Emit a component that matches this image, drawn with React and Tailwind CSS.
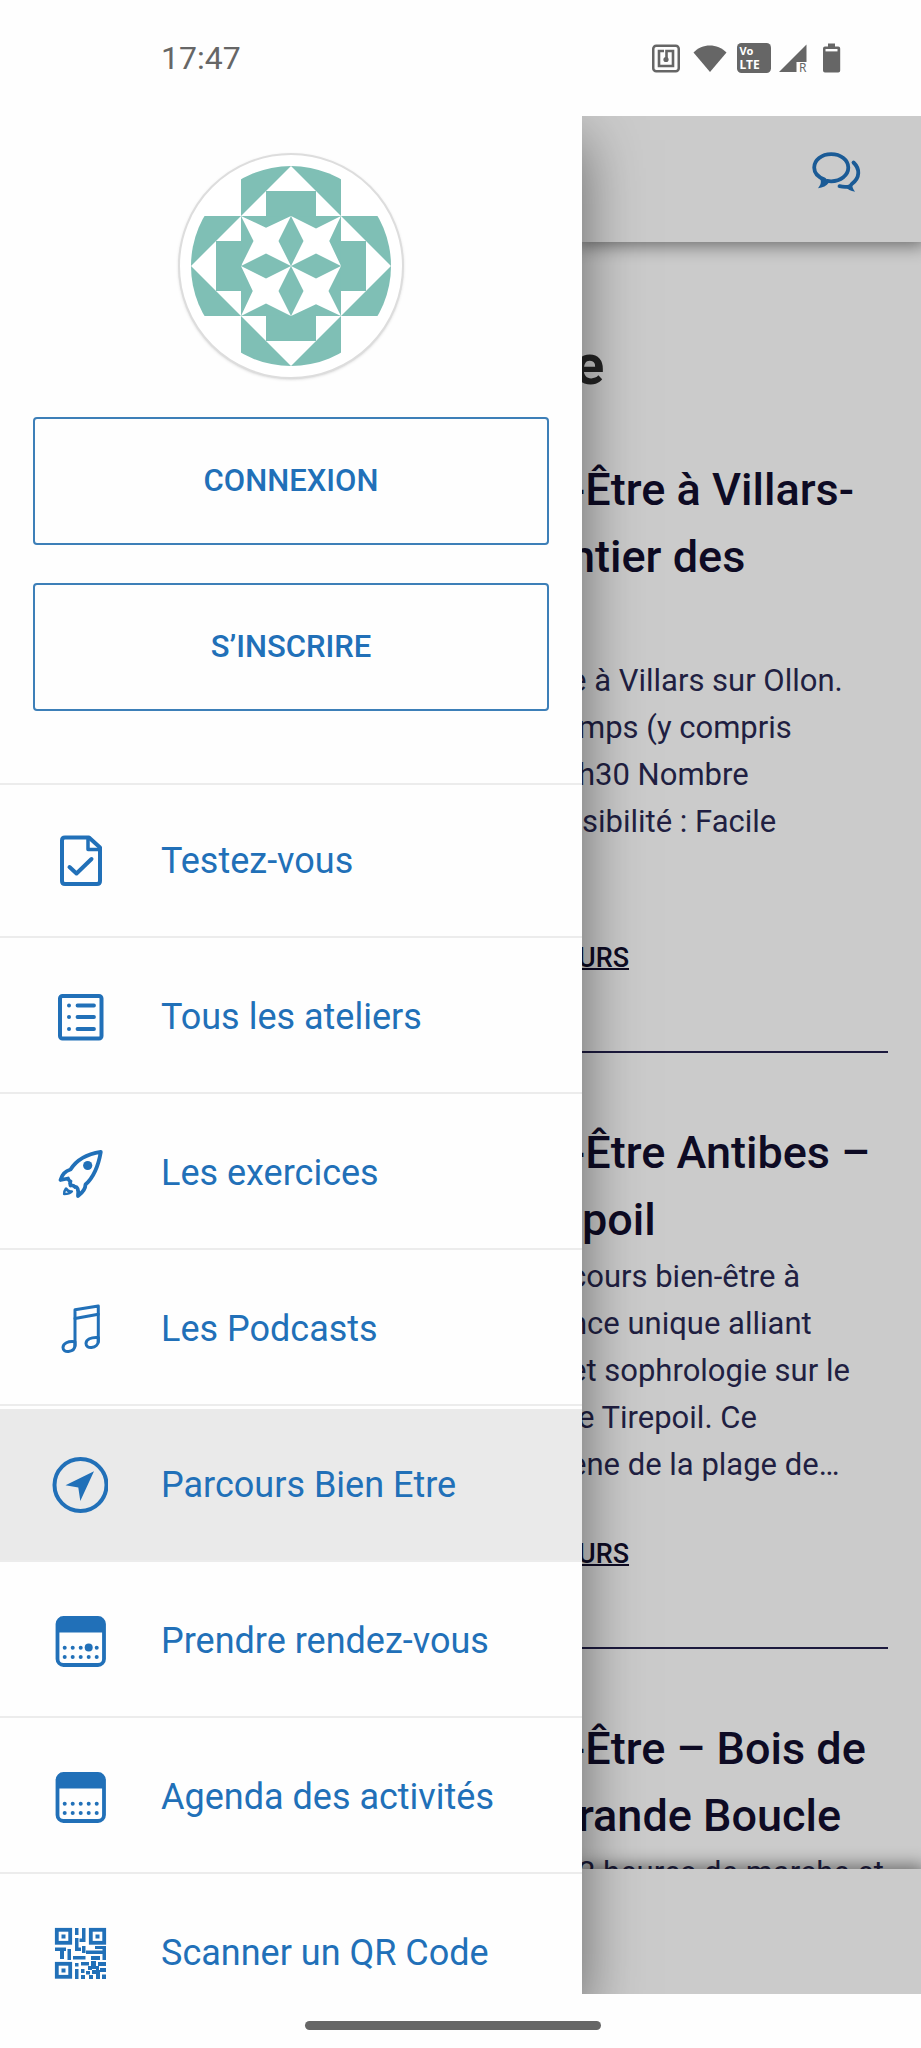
/**
 * App.jsx - Mobile screen with the navigation drawer open
 *
 * Android status bar on top, the drawer (avatar, account buttons and menu)
 * on the left, the dimmed "Parcours" list page behind it on the right, and
 * the gesture bar at the bottom.
 */

function NfcIcon() {
  return (
    <svg width="28" height="29" viewBox="0 0 28 29" fill="none" stroke="#666666" aria-hidden="true">
      <rect x="1.25" y="1.75" width="25.5" height="25.5" rx="3" strokeWidth="2.5" />
      <path d="M12 7H7v15h14V7h-6.5v8" strokeWidth="2.6" />
      <circle cx="14" cy="15.5" r="2.6" fill="#666666" stroke="none" />
    </svg>
  );
}

function WifiIcon() {
  return (
    <svg width="41" height="29" viewBox="0 0 41 29" fill="#666666" aria-hidden="true">
      <path d="M5.5 8.5C14 -1 29.5 -1 38.5 8.5L22 28Z" />
    </svg>
  );
}

function VolteIcon() {
  return (
    <svg width="34" height="30" viewBox="0 0 34 30" aria-hidden="true">
      <rect width="34" height="30" rx="4.5" fill="#666666" />
      <g fill="#ffffff" fontFamily="Noto Sans, sans-serif" fontWeight="700">
        <text x="2.5" y="12" fontSize="11">Vo</text>
        <text x="2.5" y="26" fontSize="12">LTE</text>
      </g>
    </svg>
  );
}

function SignalIcon() {
  return (
    <svg width="28" height="29" viewBox="0 0 28 29" aria-hidden="true">
      <path d="M27.5 0.5V28H0Z" fill="#666666" />
      <rect x="17.5" y="18" width="11" height="11" fill="#fefefe" />
      <text x="20" y="28" fontSize="12" fontFamily="Noto Sans, sans-serif" fill="#666666">R</text>
    </svg>
  );
}

function BatteryIcon() {
  return (
    <svg width="26" height="30" viewBox="0 0 26 30" aria-hidden="true">
      <path d="M13 0.5h7v3h3.2q2 0 2 2V27.5q0 2-2 2H10q-2 0-2-2V5.5q0-2 2-2h3Z" fill="#666666" />
      <rect x="10.5" y="6" width="12" height="2.4" fill="#fefefe" />
    </svg>
  );
}

function ChatIcon() {
  return (
    <svg width="50" height="42" viewBox="0 0 50 42" fill="none" stroke="#1b5b96" strokeWidth="3.8" strokeLinecap="round" strokeLinejoin="round" aria-hidden="true">
      <path d="M12.5 27.6C6 25.2 2.2 20.8 2.2 15.6C2.2 8 9.7 2.2 19.2 2.2S36.3 8 36.3 15.6S28.7 29.3 19.2 29.3C17.8 29.3 16.5 29.2 15.2 28.9" />
      <path d="M8 26.5C9.8 30 8.6 33 6 36.2C11 35.5 14.5 34 17 30.5Z" fill="#1b5b96" stroke="none" />
      <path d="M41.5 10.5C47.8 16.5 48.6 25.5 39.5 32.2" />
      <path d="M27.5 34.2C31.5 35.1 35 35 38 34.3" />
      <path d="M42 30C39.2 33 40.5 36.5 43.2 39.8C38.5 39 35.5 37.5 33.5 34.5Z" fill="#1b5b96" stroke="none" />
    </svg>
  );
}

const STAR = '-2,-2 -1,-1.53 0,-2 -0.5,-1 0,0 -1,-0.5 -2,0 -1.5,-1';

function Avatar() {
  return (
    <svg className="size-[200px]" viewBox="-4 -4 8 8" role="img" aria-label="Avatar">
      <clipPath id="avatar-disc">
        <circle r="4" />
      </clipPath>
      <g clipPath="url(#avatar-disc)">
        <path d="M-2 -4H2V4H-2Z M-4 -2H-2V2H-4Z M2 -2H4V2H2Z" fill="#7fbfb5" />
        {[0, 90, 180, 270].map((angle) => (
          <g key={angle} transform={`rotate(${angle})`}>
            <path d="M-2 -2L0 -4L2 -2Z" fill="#ffffff" />
            <path d="M-1 -1.98V-3H1V-1.98Z" fill="#7fbfb5" />
            <polygon points={STAR} fill="#ffffff" />
          </g>
        ))}
      </g>
    </svg>
  );
}

function MenuIcon({ children }) {
  return (
    <svg
      className="size-14 shrink-0 text-[#2170b8]"
      viewBox="0 0 56 56"
      fill="none"
      stroke="currentColor"
      strokeWidth="4"
      strokeLinecap="round"
      strokeLinejoin="round"
      aria-hidden="true"
    >
      {children}
    </svg>
  );
}

function TestIcon() {
  return (
    <MenuIcon>
      <path d="M37 4.5H13Q10 4.5 10 7.5V48Q10 51 13 51H45Q48 51 48 48V14.5Z" />
      <path d="M36 5V16.5H47.5" strokeWidth="3.5" />
      <path d="M17.5 34L24.5 40.5L39.5 26" />
    </MenuIcon>
  );
}

function ListIcon() {
  return (
    <MenuIcon>
      <rect x="8" y="7" width="41.5" height="42.5" rx="2.5" />
      <path d="M25.5 16.5H42M25.5 28H42M25.5 40H42" strokeWidth="3.8" />
      <g fill="currentColor" stroke="none">
        <circle cx="17" cy="16.5" r="2" />
        <circle cx="17" cy="28" r="2" />
        <circle cx="17" cy="40" r="2" />
      </g>
    </MenuIcon>
  );
}

function RocketIcon() {
  return (
    <MenuIcon>
      <g strokeWidth="3.8">
        <path d="M48.8 6.8C35 9 24 15.5 18.5 24.5C13 26 10 29.5 8.5 35L16 33.5C16.5 35 17.5 36 18.5 36.5C17.5 38 18 39.5 18.5 40.5C20.5 40 22 40.5 23 42C25 41.5 27 44 26 51C32 46.5 33.5 43 33.5 39.5C42 32 46.5 20 48.8 6.8Z" />
        <path d="M14 43.5C12.5 45.5 12 47.5 12.2 49C15 49 18 48.5 19.8 46.5C17.5 47 15.5 46 14 43.5Z" strokeWidth="2.6" />
      </g>
      <circle cx="35.7" cy="20.5" r="4.6" fill="currentColor" stroke="none" />
    </MenuIcon>
  );
}

function MusicIcon() {
  return (
    <MenuIcon>
      <g strokeWidth="3">
        <path d="M23 45V8.8L46.3 5V41" />
        <path d="M23 17.5L46.3 13.3" />
        <path d="M23 40.8C16 39.8 11 42.5 11 46.5C11 49.5 13.5 50.8 16.5 50.5C20.5 50 23 47.5 23 44Z" />
        <path d="M46.3 36.5C39 35.8 34 38.5 34 42.5C34 45.5 36.5 46.8 39.5 46.5C43.5 46 46.3 43.5 46.3 40Z" />
      </g>
    </MenuIcon>
  );
}

function CompassIcon() {
  return (
    <MenuIcon>
      <circle cx="28.5" cy="28" r="26" />
      <path d="M42 14.3L13.5 28.3L26.3 30.5L28.3 44Z" fill="currentColor" stroke="none" />
    </MenuIcon>
  );
}

const DOT_COLUMNS = [12.7, 20.7, 28.7, 36.7, 44.7];

function CalendarIcon({ marked }) {
  return (
    <MenuIcon>
      <rect x="5.5" y="5" width="46.5" height="47" rx="6" strokeWidth="3.8" />
      <path d="M5.5 19.5V11Q5.5 5 11.5 5H46Q52 5 52 11V19.5Z" fill="currentColor" stroke="none" />
      <g fill="currentColor" stroke="none">
        {DOT_COLUMNS.map((x) => (
          <g key={x}>
            <circle cx={x} cy="34.7" r="2" />
            <circle cx={x} cy="44" r="2" />
          </g>
        ))}
        {marked && <circle cx="36.7" cy="34.5" r="4" />}
      </g>
    </MenuIcon>
  );
}

function QrIcon() {
  return (
    <MenuIcon>
      <g transform="translate(3 3)" strokeWidth="3.8" strokeLinejoin="miter">
        <rect x="1.8" y="1.8" width="13.4" height="13" />
        <rect x="35.8" y="1.8" width="13.4" height="13" />
        <rect x="1.8" y="35.8" width="13.4" height="13" />
      </g>
      <g transform="translate(3 3)" fill="currentColor" stroke="none">
        <path d="M6.5 6.5h4v4h-4z M40.5 6.5h4v4h-4z M6.5 40.5h4v4h-4z" />
        <path d="M20 0h3.5v7H20z M27 0h3.5v14h-6v-3.5H27z M20 10h3.5v12H20z M20 19.5h6V23h-6z" />
        <path d="M0 19.5h11V23H9v8H5v-8H0z M12.5 21H16v11h-3.5z M18 28h12.5v3.5H18z M27 18h3.5v7H27z" />
        <path d="M40 18h11v14h-3.5v-6H31v-3.5h16.5V21H40z M36 28h9v4h-9z" />
        <path d="M20 35h3.5v3.5H20z M20 41h3.5v10H20z M26 34h8v3.5h-8z M26 41h3.5v4H26z M26 47h4v4h-4z" />
        <path d="M33 38h4v4h-4z M36 33h5v8h-5z M37 42h8v4h-8z M43 34h4v4h-4z M41 38h3v6h-3z M47 34h4v4h-4z M45 40h6v4h-6z" />
        <path d="M31 43h4v3.5h-4z M34 47h4v4h-4z M41 46h4v5h-4z M47 46.5h4V51h-4z" />
      </g>
    </MenuIcon>
  );
}

const MENU_ITEMS = [
  { label: 'Testez-vous', icon: <TestIcon /> },
  { label: 'Tous les ateliers', icon: <ListIcon /> },
  { label: 'Les exercices', icon: <RocketIcon /> },
  { label: 'Les Podcasts', icon: <MusicIcon /> },
  { label: 'Parcours Bien Etre', icon: <CompassIcon />, active: true },
  { label: 'Prendre rendez-vous', icon: <CalendarIcon marked /> },
  { label: 'Agenda des activités', icon: <CalendarIcon /> },
  { label: 'Scanner un QR Code', icon: <QrIcon /> },
];

const ARTICLES = [
  {
    title: [
      { text: '-Être à Villars-', pull: '-ml-3' },
      { text: 'ntier des', pull: '-ml-3' },
      { text: '' },
    ],
    body: [
      { text: 'e à Villars sur Ollon.', pull: '-ml-3' },
      { text: 'mps (y compris', pull: '-ml-1' },
      { text: 'h30 Nombre', pull: '-ml-1' },
      { text: 'sibilité : Facile' },
      { text: '' },
    ],
  },
  {
    title: [{ text: '-Être Antibes –', pull: '-ml-3' }, { text: 'poil' }],
    body: [
      { text: 'cours bien-être à', pull: '-ml-3' },
      { text: 'nce unique alliant', pull: '-ml-3' },
      { text: 'et sophrologie sur le', pull: '-ml-3' },
      { text: 'e Tirepoil. Ce', pull: '-ml-1' },
      { text: 'ène de la plage de…', pull: '-ml-3' },
    ],
  },
  {
    title: [
      { text: '-Être – Bois de', pull: '-ml-3' },
      { text: 'rande Boucle', pull: '-ml-1' },
    ],
    body: [{ text: '2 heures de marche et', pull: '-ml-1' }],
  },
];

function StatusBar() {
  return (
    <div className="flex h-[116px] shrink-0 items-center justify-between pl-[161px] pr-20 text-[#666666]">
      <span className="text-[32px] leading-10">17:47</span>
      <div className="flex items-center gap-2">
        <NfcIcon />
        <WifiIcon />
        <VolteIcon />
        <SignalIcon />
        <BatteryIcon />
      </div>
    </div>
  );
}

function AccountButton({ children }) {
  return (
    <button
      type="button"
      className="h-32 w-full rounded-[4px] border-2 border-[#3d7fb8] text-[31px] font-medium text-[#2170b8]"
    >
      {children}
    </button>
  );
}

function Drawer() {
  return (
    <aside className="relative z-20 min-h-0 bg-[#fefefe] shadow-[0_24px_56px_rgba(0,0,0,0.5)]">
      <div className="flex h-full flex-col overflow-hidden">
        <div className="flex shrink-0 flex-col items-center gap-[38px] px-[33px] pt-[37px] pb-[72px]">
          <div className="flex size-[226px] items-center justify-center rounded-full border-2 border-[#dddddd] bg-white shadow-sm">
            <Avatar />
          </div>
          <AccountButton>CONNEXION</AccountButton>
          <AccountButton>S’INSCRIRE</AccountButton>
        </div>

        <nav>
          <ul className="flex flex-col gap-[3px] border-t-2 border-[#ececec]">
            {MENU_ITEMS.map((item) => (
              <li
                key={item.label}
                className={`border-b-2 border-[#ececec] ${item.active ? 'bg-[#eaeaea]' : ''}`}
              >
                <a
                  href="#"
                  aria-current={item.active ? 'page' : undefined}
                  className="flex h-[151px] items-center gap-[53px] pl-[52px] text-4xl whitespace-nowrap text-[#2170b8]"
                >
                  {item.icon}
                  {item.label}
                </a>
              </li>
            ))}
          </ul>
        </nav>
      </div>
    </aside>
  );
}

function Article({ article }) {
  return (
    <article className="mr-[33px] border-b-2 border-[#1c1a3e] pt-[66px] pb-[77px] whitespace-nowrap">
      <h2 className="text-[45px] leading-[67px] font-medium text-[#0e0b24]">
        {article.title.map((line, index) => (
          <span key={index} className={`block h-[67px] ${line.pull ?? ''}`}>
            {line.text}
          </span>
        ))}
      </h2>
      <p className="text-[31px] leading-[47px] text-[#211f42]">
        {article.body.map((line, index) => (
          <span key={index} className={`block h-[47px] ${line.pull ?? ''}`}>
            {line.text}
          </span>
        ))}
      </p>
      <a
        href="#"
        className="mt-[50px] -ml-1 block text-[27px] leading-8 font-medium text-[#0e0b24] underline decoration-2"
      >
        URS
      </a>
    </article>
  );
}

function Page() {
  return (
    <main className="flex min-h-0 min-w-0 flex-col bg-[#cbcbcb]">
      <header className="relative z-10 flex h-[126px] shrink-0 items-start justify-end bg-[#cbcbcb] pt-9 pr-[59px] shadow-[0_0_16px_4px_rgba(0,0,0,0.45)]">
        <button type="button" aria-label="Messages">
          <ChatIcon />
        </button>
      </header>

      <div className="min-h-0 flex-1 overflow-hidden pt-[98px]">
        <h1 className="-ml-2 text-[56px] leading-[50px] font-bold text-[#242424]">e</h1>
        {ARTICLES.map((article) => (
          <Article key={article.title[0].text} article={article} />
        ))}
      </div>

      <footer className="relative z-10 h-[125px] shrink-0 bg-[#cbcbcb] shadow-[0_0_16px_4px_rgba(0,0,0,0.45)]" />
    </main>
  );
}

export default function App() {
  return (
    <div className="flex h-screen flex-col overflow-hidden bg-[#fefefe] font-[Roboto,sans-serif]">
      <StatusBar />
      <div className="grid min-h-0 flex-1 grid-cols-[582fr_339fr] grid-rows-[minmax(0,1fr)] overflow-hidden">
        <Drawer />
        <Page />
      </div>
      <div className="flex h-[54px] shrink-0 justify-center pt-[27px] pr-4">
        <div className="h-[9px] w-[296px] rounded-full bg-[#666666]" />
      </div>
    </div>
  );
}
